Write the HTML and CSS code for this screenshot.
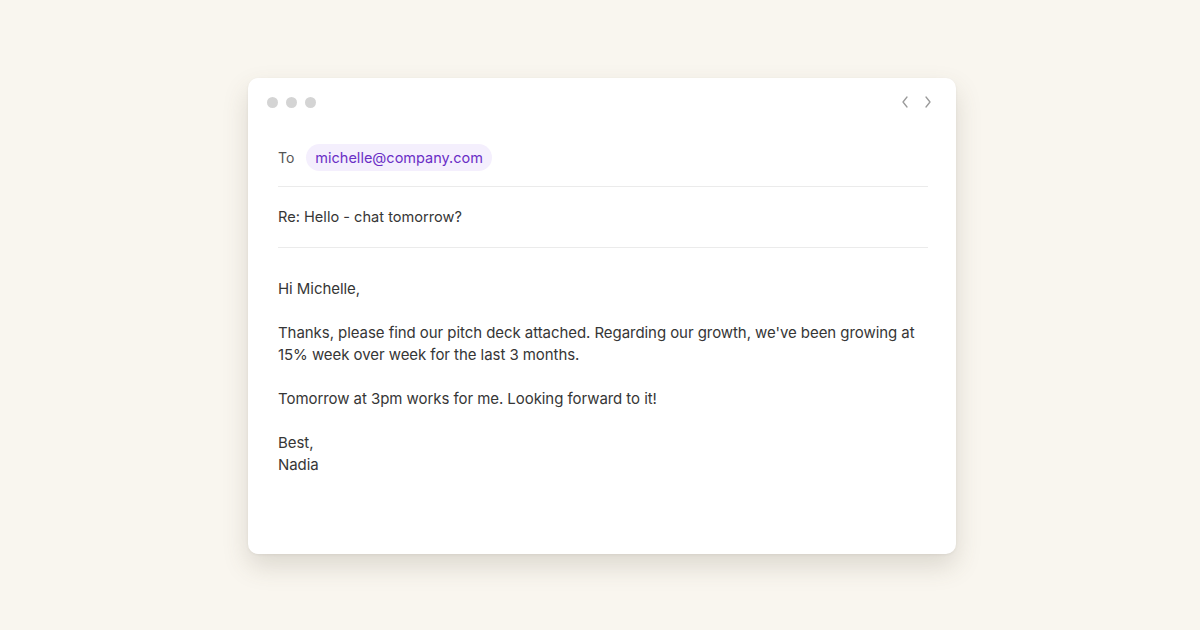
FILE: index.html
```html
<!DOCTYPE html>
<html lang="en">
<head>
    <meta charset="UTF-8">
    <meta name="viewport" content="width=device-width, initial-scale=1.0">
    <title>Compose</title>
    <link rel="stylesheet" href="styles.css">
</head>
<body>
    <div class="window">
        <div class="window-bar">
            <div class="dots">
                <span class="dot"></span>
                <span class="dot"></span>
                <span class="dot"></span>
            </div>
            <div class="nav">
                <svg width="10" height="14" viewBox="0 0 10 14"><path d="M7 2 L3 7 L7 12" fill="none" stroke="#9a9a9a" stroke-width="1.3" stroke-linecap="round" stroke-linejoin="round"/></svg>
                <svg width="10" height="14" viewBox="0 0 10 14"><path d="M3 2 L7 7 L3 12" fill="none" stroke="#9a9a9a" stroke-width="1.3" stroke-linecap="round" stroke-linejoin="round"/></svg>
            </div>
        </div>

        <div class="mail">
            <div class="field to-row">
                <span class="label">To</span>
                <span class="chip">michelle@company.com</span>
            </div>
            <div class="field subject">Re: Hello - chat tomorrow?</div>

            <div class="message">
                <p>Hi Michelle,</p>
                <p>Thanks, please find our pitch deck attached. Regarding our growth, we've been growing at 15% week over week for the last 3 months.</p>
                <p>Tomorrow at 3pm works for me. Looking forward to it!</p>
                <p>Best,<br>Nadia</p>
            </div>
        </div>
    </div>
</body>
</html>
```

FILE: styles.css
```css
body {
    margin: 0;
    height: 630px;
    display: flex;
    align-items: center;
    justify-content: center;
    background-color: #f9f6ef;
    font-family: Inter, "Noto Sans", sans-serif;
    color: #363636;
}

.window {
    width: 708px;
    height: 476px;
    margin: 2px 0 0 4px;
    background: white;
    border-radius: 10px;
    box-shadow: 0 12px 26px rgba(90, 80, 60, 0.18), 0 1px 3px rgba(0, 0, 0, 0.06);
    box-sizing: border-box;
}

.window-bar {
    height: 48px;
    display: flex;
    align-items: center;
    justify-content: space-between;
    padding: 0 23px 0 19px;
}

.dots { display: flex; gap: 8px; }
.dot {
    width: 11px;
    height: 11px;
    border-radius: 50%;
    background: #d4d4d4;
}

.nav { display: flex; gap: 13px; }
.nav svg { display: block; }

.mail { padding: 0 28px 0 30px; }

.field {
    height: 60px;
    display: flex;
    align-items: center;
    border-bottom: 1px solid #ebebeb;
    font-size: 14.6px;
}

.to-row {
    height: 61px;
    padding-top: 2px;
    box-sizing: border-box;
}

.label {
    color: #555555;
    font-size: 14px;
    margin-right: 12px;
}

.chip {
    background: #f4effd;
    color: #6a2ec6;
    padding: 4px 9px;
    border-radius: 14px;
    font-size: 14.5px;
    line-height: 19px;
}

.message {
    padding-top: 30px;
    font-size: 15px;
    letter-spacing: -0.06px;
    line-height: 22px;
}

.message p { margin: 0 0 22px; }
```
